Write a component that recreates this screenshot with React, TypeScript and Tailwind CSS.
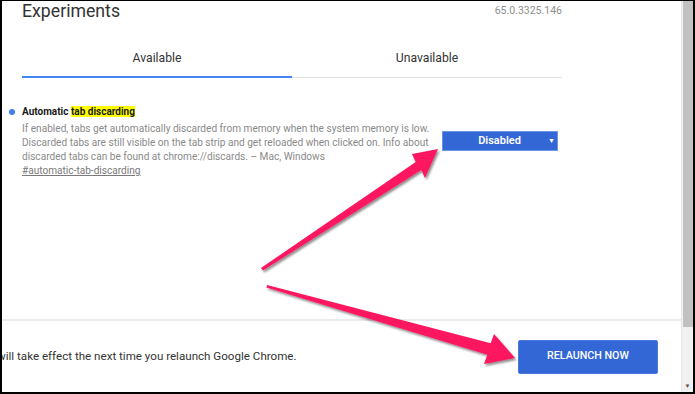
import React from "react";

export default function App() {
  return (
    <div
      className="relative flex w-[695px] h-[394px] overflow-hidden bg-white border-black border-l-2 border-r-2 border-t border-b-2"
      style={{ fontFamily: "Roboto, 'Liberation Sans', sans-serif" }}
    >
      <div className="flex flex-col flex-1 min-w-0">
        {/* top section */}
        <div className="flex-1 min-h-0">
          <div className="flex items-start justify-between w-[560px] pl-[20px]">
            <div className="text-[17.7px] leading-[20px] text-[#333]">Experiments</div>
            <div className="mt-[4px] text-[10.5px] leading-[12px] text-[#8e8e8e]">65.0.3325.146</div>
          </div>
          <div className="flex w-[560px] pl-[20px] mt-[19px]">
            <div className="flex-1 h-[38px] flex items-center justify-center border-b-2 border-[#4285f4] text-[12.2px] text-[#333]">
              Available
            </div>
            <div className="flex-1 h-[38px] flex items-center justify-center border-b border-[#e2e2e2] pb-[1px] text-[12.2px] text-[#333]">
              Unavailable
            </div>
          </div>
          <div className="flex items-start mt-[27px]">
            <div className="w-[20px] h-[14px] flex items-center">
              <div className="w-[6px] h-[6px] ml-[7px] rounded-full bg-[#3f7fea]" />
            </div>
            <div className="w-[410px]">
              <div className="text-[10px] leading-[14px] font-bold text-[#1a1a1a]">
                Automatic <span className="bg-[#ffff00]">tab discarding</span>
              </div>
              <div className="mt-[2.5px] text-[10.1px] leading-[14.3px] text-[#8a8a8a] whitespace-nowrap">
                If enabled, tabs get automatically discarded from memory when the system memory is low.
                <br />
                Discarded tabs are still visible on the tab strip and get reloaded when clicked on. Info about
                <br />
                discarded tabs can be found at chrome://discards. – Mac, Windows
                <br />
                <span className="underline text-[#7a7a7a]">#automatic-tab-discarding</span>
              </div>
            </div>
            <div className="ml-[10px] mt-[26px] w-[116px] h-[20px] bg-[#3367d6] border border-[#6d95ea] flex items-center text-white">
              <div className="flex-1 text-center text-[11px] font-semibold pl-[8px]">Disabled</div>
              <div className="w-[9px] text-[7px] leading-none">▼</div>
            </div>
          </div>
        </div>
        {/* bottom bar */}
        <div className="h-[73px] border-t-2 border-[#ebebeb] flex items-center justify-between pr-[23px]">
          <div className="ml-[-5px] text-[11.6px] text-[#333] whitespace-nowrap">
            will take effect the next time you relaunch Google Chrome.
          </div>
          <div className="w-[140px] h-[34px] rounded-[2px] bg-[#3367d6] border border-[#4a78de] flex items-center justify-center text-white text-[10.7px] font-medium">
            RELAUNCH NOW
          </div>
        </div>
      </div>
      {/* scrollbar */}
      <div className="w-[12px] bg-[#f1f1f1] flex flex-col border-l border-[#e6e6e6]">
        <div className="h-[326px] w-[10px] ml-[1px] bg-[#c1c1c1]" />
        <div className="flex-1 flex items-end justify-center pb-[3px]">
          <div className="text-[6px] leading-none text-[#505050]">▼</div>
        </div>
      </div>
      {/* annotation arrows */}
      <svg className="absolute left-0 top-0 pointer-events-none" width="695" height="394" viewBox="0 0 695 394">
        <defs>
          <filter id="sh" x="-20%" y="-20%" width="140%" height="140%">
            <feDropShadow dx="1.5" dy="2" stdDeviation="1.2" floodColor="#000" floodOpacity="0.45" />
          </filter>
        </defs>
        <polygon
          filter="url(#sh)"
          fill="#fd1560"
          points="259,267 413.7,160.9 410,153 436,148 423,177 419.3,169.1 261,269.5"
        />
        <polygon
          filter="url(#sh)"
          fill="#fd1560"
          points="265,284 488.7,342.2 492,333 513,357 482,363 485.3,353.8 264.5,286.5"
        />
      </svg>
    </div>
  );
}
